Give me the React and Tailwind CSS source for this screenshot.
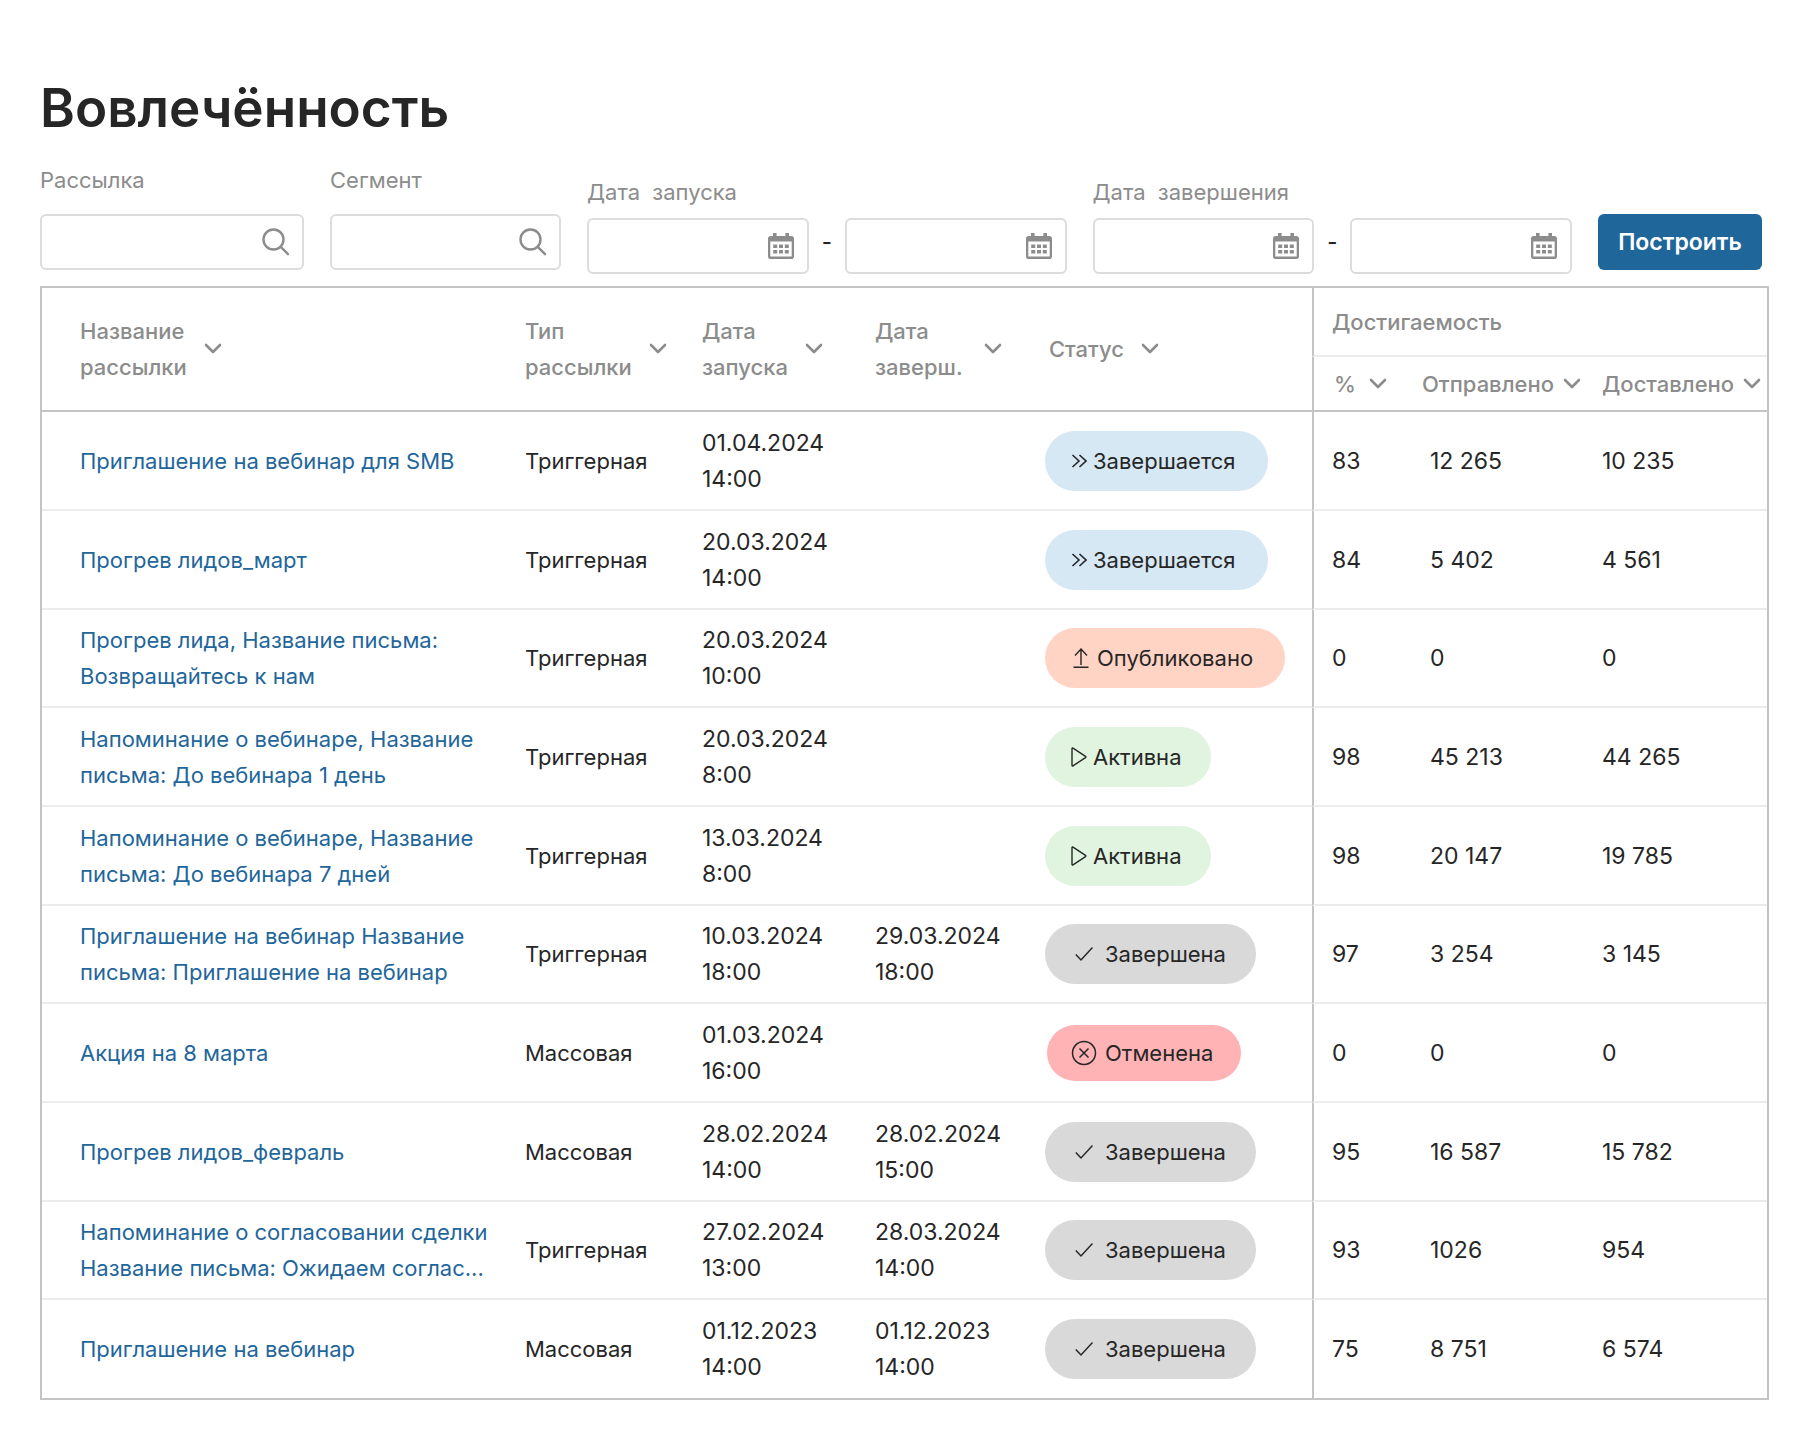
import { Fragment } from "react";

const SearchIcon = () => (
  <svg className="h-8 w-8" viewBox="0 0 32 32" fill="none" stroke="#8c8c8c" strokeWidth="2.4" strokeLinecap="round">
    <circle cx="13.5" cy="13.5" r="10" />
    <path d="M21 21.2 28 28.2" />
  </svg>
);

const CalendarIcon = () => (
  <svg className="h-8 w-8" viewBox="0 0 32 32" fill="#8c8c8c">
    <path d="M8 3h3.6v3h8.8V3H24v3h2.2A2.8 2.8 0 0 1 29 8.8V26.2A2.8 2.8 0 0 1 26.2 29H5.8A2.8 2.8 0 0 1 3 26.2V8.8A2.8 2.8 0 0 1 5.8 6H8ZM5.3 11.5V26.5H26.7V11.5Z" fillRule="evenodd" />
    <path d="M8.2 14.5h4v3.400h-4zM14 14.5h4v3.400h-4zM19.800 14.5h4v3.400h-4zM8.2 20h4v3.400h-4zM14 20h4v3.400h-4zM19.800 20h4v3.400h-4z" />
  </svg>
);

const Chevron = () => (
  <svg className="h-3 w-5 shrink-0" viewBox="0 0 20 12" fill="none" stroke="#8c8c8c" strokeWidth="2.6" strokeLinecap="round" strokeLinejoin="round">
    <path d="M3 2 10 9 17 2" />
  </svg>
);

const statuses = {
  finishing: {
    label: "Завершается",
    style: "h-[60px] bg-[#d6e8f4] pl-[26px] pr-8 gap-1.5",
    icon: (
      <svg className="h-4 w-4" viewBox="0 0 16 16" fill="none" stroke="currentColor" strokeWidth="1.6">
        <path d="M1.500 2 8 8 1.500 14M8.500 2 15 8 8.500 14" />
      </svg>
    ),
  },
  published: {
    label: "Опубликовано",
    style: "h-[60px] bg-[#ffd4c5] pl-7 pr-8 gap-2",
    icon: (
      <svg className="h-[22px] w-4" viewBox="0 0 16 22" fill="none" stroke="currentColor" strokeWidth="1.4">
        <path d="M8 18V2M2 8.5 8 2l6 6.500M.5 20.300h15" />
      </svg>
    ),
  },
  active: {
    label: "Активна",
    style: "h-[60px] bg-[#e0f4e0] pl-[26px] pr-[30px] gap-1.5",
    icon: (
      <svg className="h-5 w-4" viewBox="0 0 16 20" fill="none" stroke="currentColor" strokeWidth="1.4" strokeLinejoin="round">
        <path d="M1 1.800V18.200Q1 19.400 2 18.800L14.500 10.600Q15.300 10 14.500 9.400L2 1.200Q1 .6 1 1.800Z" />
      </svg>
    ),
  },
  finished: {
    label: "Завершена",
    style: "h-[60px] bg-[#d9d9d9] pl-[30px] pr-[30px] gap-3",
    icon: (
      <svg className="h-4 w-[18px]" viewBox="0 0 18 16" fill="none" stroke="currentColor" strokeWidth="1.5">
        <path d="M.8 8.500 6 14 17.500 1.500" />
      </svg>
    ),
  },
  canceled: {
    label: "Отменена",
    style: "ml-[2px] h-14 bg-[#ffb3b5] pl-6 pr-7 gap-2",
    icon: (
      <svg className="h-[26px] w-[26px]" viewBox="0 0 26 26" fill="none" stroke="currentColor" strokeWidth="1.5">
        <circle cx="13" cy="13" r="11.500" />
        <path d="m8.500 8.500 9 9M17.500 8.500l-9 9" />
      </svg>
    ),
  },
};

const mailings = [
  { name: ["Приглашение на вебинар для SMB"], type: "Триггерная", start: ["01.04.2024", "14:00"], status: "finishing", percent: "83", sent: "12 265", delivered: "10 235" },
  { name: ["Прогрев лидов_март"], type: "Триггерная", start: ["20.03.2024", "14:00"], status: "finishing", percent: "84", sent: "5 402", delivered: "4 561" },
  { name: ["Прогрев лида, Название письма:", "Возвращайтесь к нам"], type: "Триггерная", start: ["20.03.2024", "10:00"], status: "published", percent: "0", sent: "0", delivered: "0" },
  { name: ["Напоминание о вебинаре, Название", "письма: До вебинара 1 день"], type: "Триггерная", start: ["20.03.2024", "8:00"], status: "active", percent: "98", sent: "45 213", delivered: "44 265" },
  { name: ["Напоминание о вебинаре, Название", "письма: До вебинара 7 дней"], type: "Триггерная", start: ["13.03.2024", "8:00"], status: "active", percent: "98", sent: "20 147", delivered: "19 785" },
  { name: ["Приглашение на вебинар Название", "письма: Приглашение на вебинар"], type: "Триггерная", start: ["10.03.2024", "18:00"], end: ["29.03.2024", "18:00"], status: "finished", percent: "97", sent: "3 254", delivered: "3 145" },
  { name: ["Акция на 8 марта"], type: "Массовая", start: ["01.03.2024", "16:00"], status: "canceled", percent: "0", sent: "0", delivered: "0" },
  { name: ["Прогрев лидов_февраль"], type: "Массовая", start: ["28.02.2024", "14:00"], end: ["28.02.2024", "15:00"], status: "finished", percent: "95", sent: "16 587", delivered: "15 782" },
  { name: ["Напоминание о согласовании сделки", "Название письма: Ожидаем соглас..."], type: "Триггерная", start: ["27.02.2024", "13:00"], end: ["28.03.2024", "14:00"], status: "finished", percent: "93", sent: "1026", delivered: "954" },
  { name: ["Приглашение на вебинар"], type: "Массовая", start: ["01.12.2023", "14:00"], end: ["01.12.2023", "14:00"], status: "finished", percent: "75", sent: "8 751", delivered: "6 574" },
];

const Lines = ({ items = [] }) =>
  items.map((line, i) => (
    <Fragment key={i}>
      {i > 0 && <br />}
      {line}
    </Fragment>
  ));

const SearchField = ({ id, label, width }) => (
  <div className={width}>
    <label htmlFor={id} className="block leading-9 text-[#8c8c8c]">{label}</label>
    <div className="relative mt-4">
      <input id={id} type="text" className="h-14 w-full rounded-md border-2 border-[#dcdcdc] bg-white pl-3 pr-12 outline-none" />
      <span className="pointer-events-none absolute inset-y-0 right-3 flex items-center"><SearchIcon /></span>
    </div>
  </div>
);

const DateInput = (props) => (
  <div className="relative flex-1">
    <input type="text" className="h-14 w-full rounded-md border-2 border-[#dcdcdc] bg-white pl-3 pr-12 outline-none" {...props} />
    <span className="pointer-events-none absolute inset-y-0 right-3 flex items-center"><CalendarIcon /></span>
  </div>
);

const DateRange = ({ id, label }) => (
  <div className="mt-3 flex-1">
    <label htmlFor={id} className="block leading-9 whitespace-pre text-[#8c8c8c]">{label}</label>
    <div className="mt-2 flex">
      <DateInput id={id} />
      <span className="w-9 pt-2 text-center font-medium">-</span>
      <DateInput aria-label={label} />
    </div>
  </div>
);

const SortButton = ({ lines, gap }) => (
  <button type="button" className={`flex items-center text-left font-medium ${gap}`}>
    <span><Lines items={lines} /></span>
    <Chevron />
  </button>
);

const App = () => {
  return (
    <div className="min-h-screen bg-white pt-[76px] pr-[39px] pb-12 pl-10 font-['Inter','Liberation_Sans',sans-serif] text-[22px] text-[#262626]">
      <h1 className="text-[53px] leading-16 font-semibold">Вовлечённость</h1>

      {/* Filters */}
      <form className="mt-[22px] mr-[7px] flex items-start gap-[26px]" onSubmit={(e) => e.preventDefault()}>
        <SearchField id="mailing" label="Рассылка" width="w-[264px]" />
        <SearchField id="segment" label="Сегмент" width="w-[231px]" />
        <DateRange id="start" label="Дата  запуска" />
        <DateRange id="end" label="Дата  завершения" />
        <button type="submit" className="mt-[52px] h-14 w-[164px] rounded-md bg-[#1f669b] text-[23px] font-semibold text-white">
          Построить
        </button>
      </form>

      <table className="mt-3 w-full table-fixed border-separate border-spacing-0 border-2 border-[#c4c4c4]">
        <colgroup>
          <col />
          <col className="w-[177px]" />
          <col className="w-[173px]" />
          <col className="w-[170px]" />
          <col className="w-[283px]" />
          <col className="w-[102px]" />
          <col className="w-[172px]" />
          <col className="w-[181px]" />
        </colgroup>
        <thead className="text-left leading-9 text-[#8c8c8c]">
          <tr className="h-[69px]">
            <th rowSpan={2} className="border-b-2 border-[#c4c4c4] pl-[38px]"><SortButton lines={["Название", "рассылки"]} gap="gap-4" /></th>
            <th rowSpan={2} className="border-b-2 border-[#c4c4c4] pl-4"><SortButton lines={["Тип", "рассылки"]} gap="gap-4" /></th>
            <th rowSpan={2} className="border-b-2 border-[#c4c4c4] pl-4"><SortButton lines={["Дата", "запуска"]} gap="gap-4" /></th>
            <th rowSpan={2} className="border-b-2 border-[#c4c4c4] pl-4"><SortButton lines={["Дата", "заверш."]} gap="gap-5" /></th>
            <th rowSpan={2} className="border-b-2 border-[#c4c4c4] pl-5"><SortButton lines={["Статус"]} gap="gap-4" /></th>
            <th colSpan={3} className="border-b-2 border-l-2 border-b-[#ececec] border-l-[#c4c4c4] pl-[18px] font-medium">Достигаемость</th>
          </tr>
          <tr className="h-[55px]">
            <th className="border-b-2 border-l-2 border-[#c4c4c4] pl-5"><SortButton lines={["%"]} gap="gap-3" /></th>
            <th className="border-b-2 border-[#c4c4c4] pl-2"><SortButton lines={["Отправлено"]} gap="gap-2" /></th>
            <th className="border-b-2 border-[#c4c4c4] pl-4"><SortButton lines={["Доставлено"]} gap="gap-2" /></th>
          </tr>
        </thead>
        <tbody className="leading-9 [&>tr]:h-[99px] [&>tr:last-child]:h-[98px] [&>tr:nth-child(3n)]:h-[98px] [&>tr:not(:last-child)>td]:border-b-2 [&>tr>td]:border-b-[#ececec]">
          {mailings.map((mailing, index) => {
            const status = statuses[mailing.status];
            return (
              <tr key={index}>
                <td className="pl-[38px] whitespace-nowrap">
                  <a href="#" className="text-[#1f669b]"><Lines items={mailing.name} /></a>
                </td>
                <td className="pl-4">{mailing.type}</td>
                <td className="pl-4 text-[23px]"><Lines items={mailing.start} /></td>
                <td className="pl-4 text-[23px]"><Lines items={mailing.end} /></td>
                <td className="pl-4">
                  <span className={`flex w-fit items-center rounded-full ${status.style}`}>
                    {status.icon}
                    {status.label}
                  </span>
                </td>
                <td className="border-l-2 border-l-[#c4c4c4] pl-[18px] text-[23px]">{mailing.percent}</td>
                <td className="pl-4 text-[23px]">{mailing.sent}</td>
                <td className="pl-4 text-[23px]">{mailing.delivered}</td>
              </tr>
            );
          })}
        </tbody>
      </table>
    </div>
  );
};

export default App;
